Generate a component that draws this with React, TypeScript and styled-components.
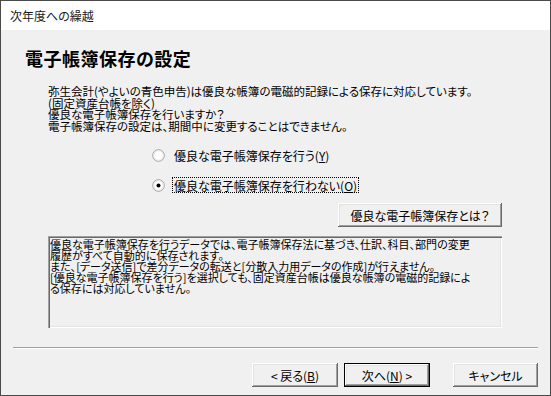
import React, { FC } from 'react';
import styled, { createGlobalStyle } from 'styled-components';

const GlobalStyle = createGlobalStyle`
  body {
    margin: 0;
    background: #f0f0f0;
  }
`;

const Window = styled.div`
  width: 551px;
  height: 396px;
  box-sizing: border-box;
  border: 1px solid #4a4a4a;
  background: #f0f0f0;
  display: flex;
  flex-direction: column;
  font-family: 'Noto Sans CJK JP', sans-serif;
  font-size: 12px;
  color: #000;
  font-feature-settings: 'palt';
`;

const TitleBar = styled.div`
  height: 29px;
  background: #fff;
  display: flex;
  align-items: center;
  padding-left: 9px;
  color: #1a1a1a;
`;

const Heading = styled.h1`
  margin: 19px 0 0 24px;
  font-size: 18px;
  line-height: 18px;
  font-weight: bold;
  letter-spacing: 0.5px;
`;

const Content = styled.div`
  padding: 0 48px 0 47px;
  display: flex;
  flex-direction: column;
`;

const Description = styled.p`
  margin: 19px 0 0;
  font-size: 11.5px;
  line-height: 11.5px;
  white-space: nowrap;
`;

const RadioGroup = styled.div`
  margin-top: 15px;
  padding-left: 104px;
  display: flex;
  flex-direction: column;
  gap: 14px;
`;

const RadioRow = styled.label`
  height: 16px;
  display: flex;
  align-items: center;
  gap: 7px;
`;

const RadioLabel = styled.span<{ $focused?: boolean }>`
  height: 16px;
  display: flex;
  align-items: center;
  padding: 0 1px;
  border: 1px dotted ${(p) => (p.$focused ? '#000' : 'transparent')};
  box-sizing: border-box;
`;

const HelpRow = styled.div`
  margin-top: 10px;
  display: flex;
  justify-content: flex-end;
`;

const Button = styled.button<{ $default?: boolean; $w: number }>`
  width: ${(p) => p.$w}px;
  height: 24px;
  padding: 0;
  background: #f0f0f0;
  font: inherit;
  color: #000;
  border: ${(p) => (p.$default ? '1px solid #000' : 'none')};
  box-sizing: border-box;
  box-shadow: inset -1px -1px #696969, inset 1px 1px #fff, inset -2px -2px #a0a0a0,
    inset 2px 2px #e3e3e3;
  display: flex;
  align-items: center;
  justify-content: center;
`;

const InfoBox = styled.div`
  margin-top: 9px;
  height: 92px;
  box-sizing: border-box;
  padding: 3px 2px;
  font-size: 11px;
  line-height: 11px;
  white-space: nowrap;
  overflow: hidden;
  box-shadow: inset 1px 1px #a0a0a0, inset 2px 2px #696969, inset -1px -1px #fff,
    inset -2px -2px #e3e3e3;
`;

const Separator = styled.div`
  margin: 19px 12px 0 12px;
  height: 1px;
  background: #a0a0a0;
  border-bottom: 1px solid #fff;
`;

const Footer = styled.div`
  margin-top: 14px;
  padding-right: 12px;
  display: flex;
  justify-content: flex-end;
`;

const Gap = styled.div<{ $w: number }>`
  width: ${(p) => p.$w}px;
`;

const Radio: FC<{ checked?: boolean }> = ({ checked }) => (
  <svg width="13" height="13" viewBox="0 0 13 13">
    <circle cx="6.5" cy="6.5" r="5.8" fill="#fff" stroke="#a0a0a0" />
    <circle cx="6.5" cy="6.5" r="4.8" fill="none" stroke="#e3e3e3" />
    {checked && <circle cx="6.5" cy="6.5" r="2" fill="#000" />}
  </svg>
);

const U: FC<{ children: React.ReactNode }> = ({ children }) => (
  <span style={{ textDecoration: 'underline' }}>{children}</span>
);

const App: FC = () => {
  return (
    <>
      <GlobalStyle />
      <Window>
        <TitleBar>次年度への繰越</TitleBar>
        <Heading>電子帳簿保存の設定</Heading>
        <Content>
          <Description>
            弥生会計(やよいの青色申告)は優良な帳簿の電磁的記録による保存に対応しています。
            <br />
            (固定資産台帳を除く)
            <br />
            優良な電子帳簿保存を行いますか？
            <br />
            電子帳簿保存の設定は、期間中に変更することはできません。
          </Description>
          <RadioGroup>
            <RadioRow>
              <Radio />
              <RadioLabel>
                優良な電子帳簿保存を行う(<U>Y</U>)
              </RadioLabel>
            </RadioRow>
            <RadioRow>
              <Radio checked />
              <RadioLabel $focused>
                優良な電子帳簿保存を行わない(<U>O</U>)
              </RadioLabel>
            </RadioRow>
          </RadioGroup>
          <HelpRow>
            <Button $w={164}>優良な電子帳簿保存とは？</Button>
          </HelpRow>
          <InfoBox>
            優良な電子帳簿保存を行うデータでは、電子帳簿保存法に基づき、仕訳、科目、部門の変更
            <br />
            履歴がすべて自動的に保存されます。
            <br />
            また、[データ送信]で差分データの転送と[分散入力用データの作成]が行えません。
            <br />
            [優良な電子帳簿保存を行う]を選択しても、固定資産台帳は優良な帳簿の電磁的記録によ
            <br />
            る保存には対応していません。
          </InfoBox>
        </Content>
        <Separator />
        <Footer>
          <Button $w={86}>
            &lt; 戻る(<U>B</U>)
          </Button>
          <Gap $w={6} />
          <Button $w={86} $default>
            次へ(<U>N</U>) &gt;
          </Button>
          <Gap $w={23} />
          <Button $w={85}>キャンセル</Button>
        </Footer>
      </Window>
    </>
  );
};

export default App;
